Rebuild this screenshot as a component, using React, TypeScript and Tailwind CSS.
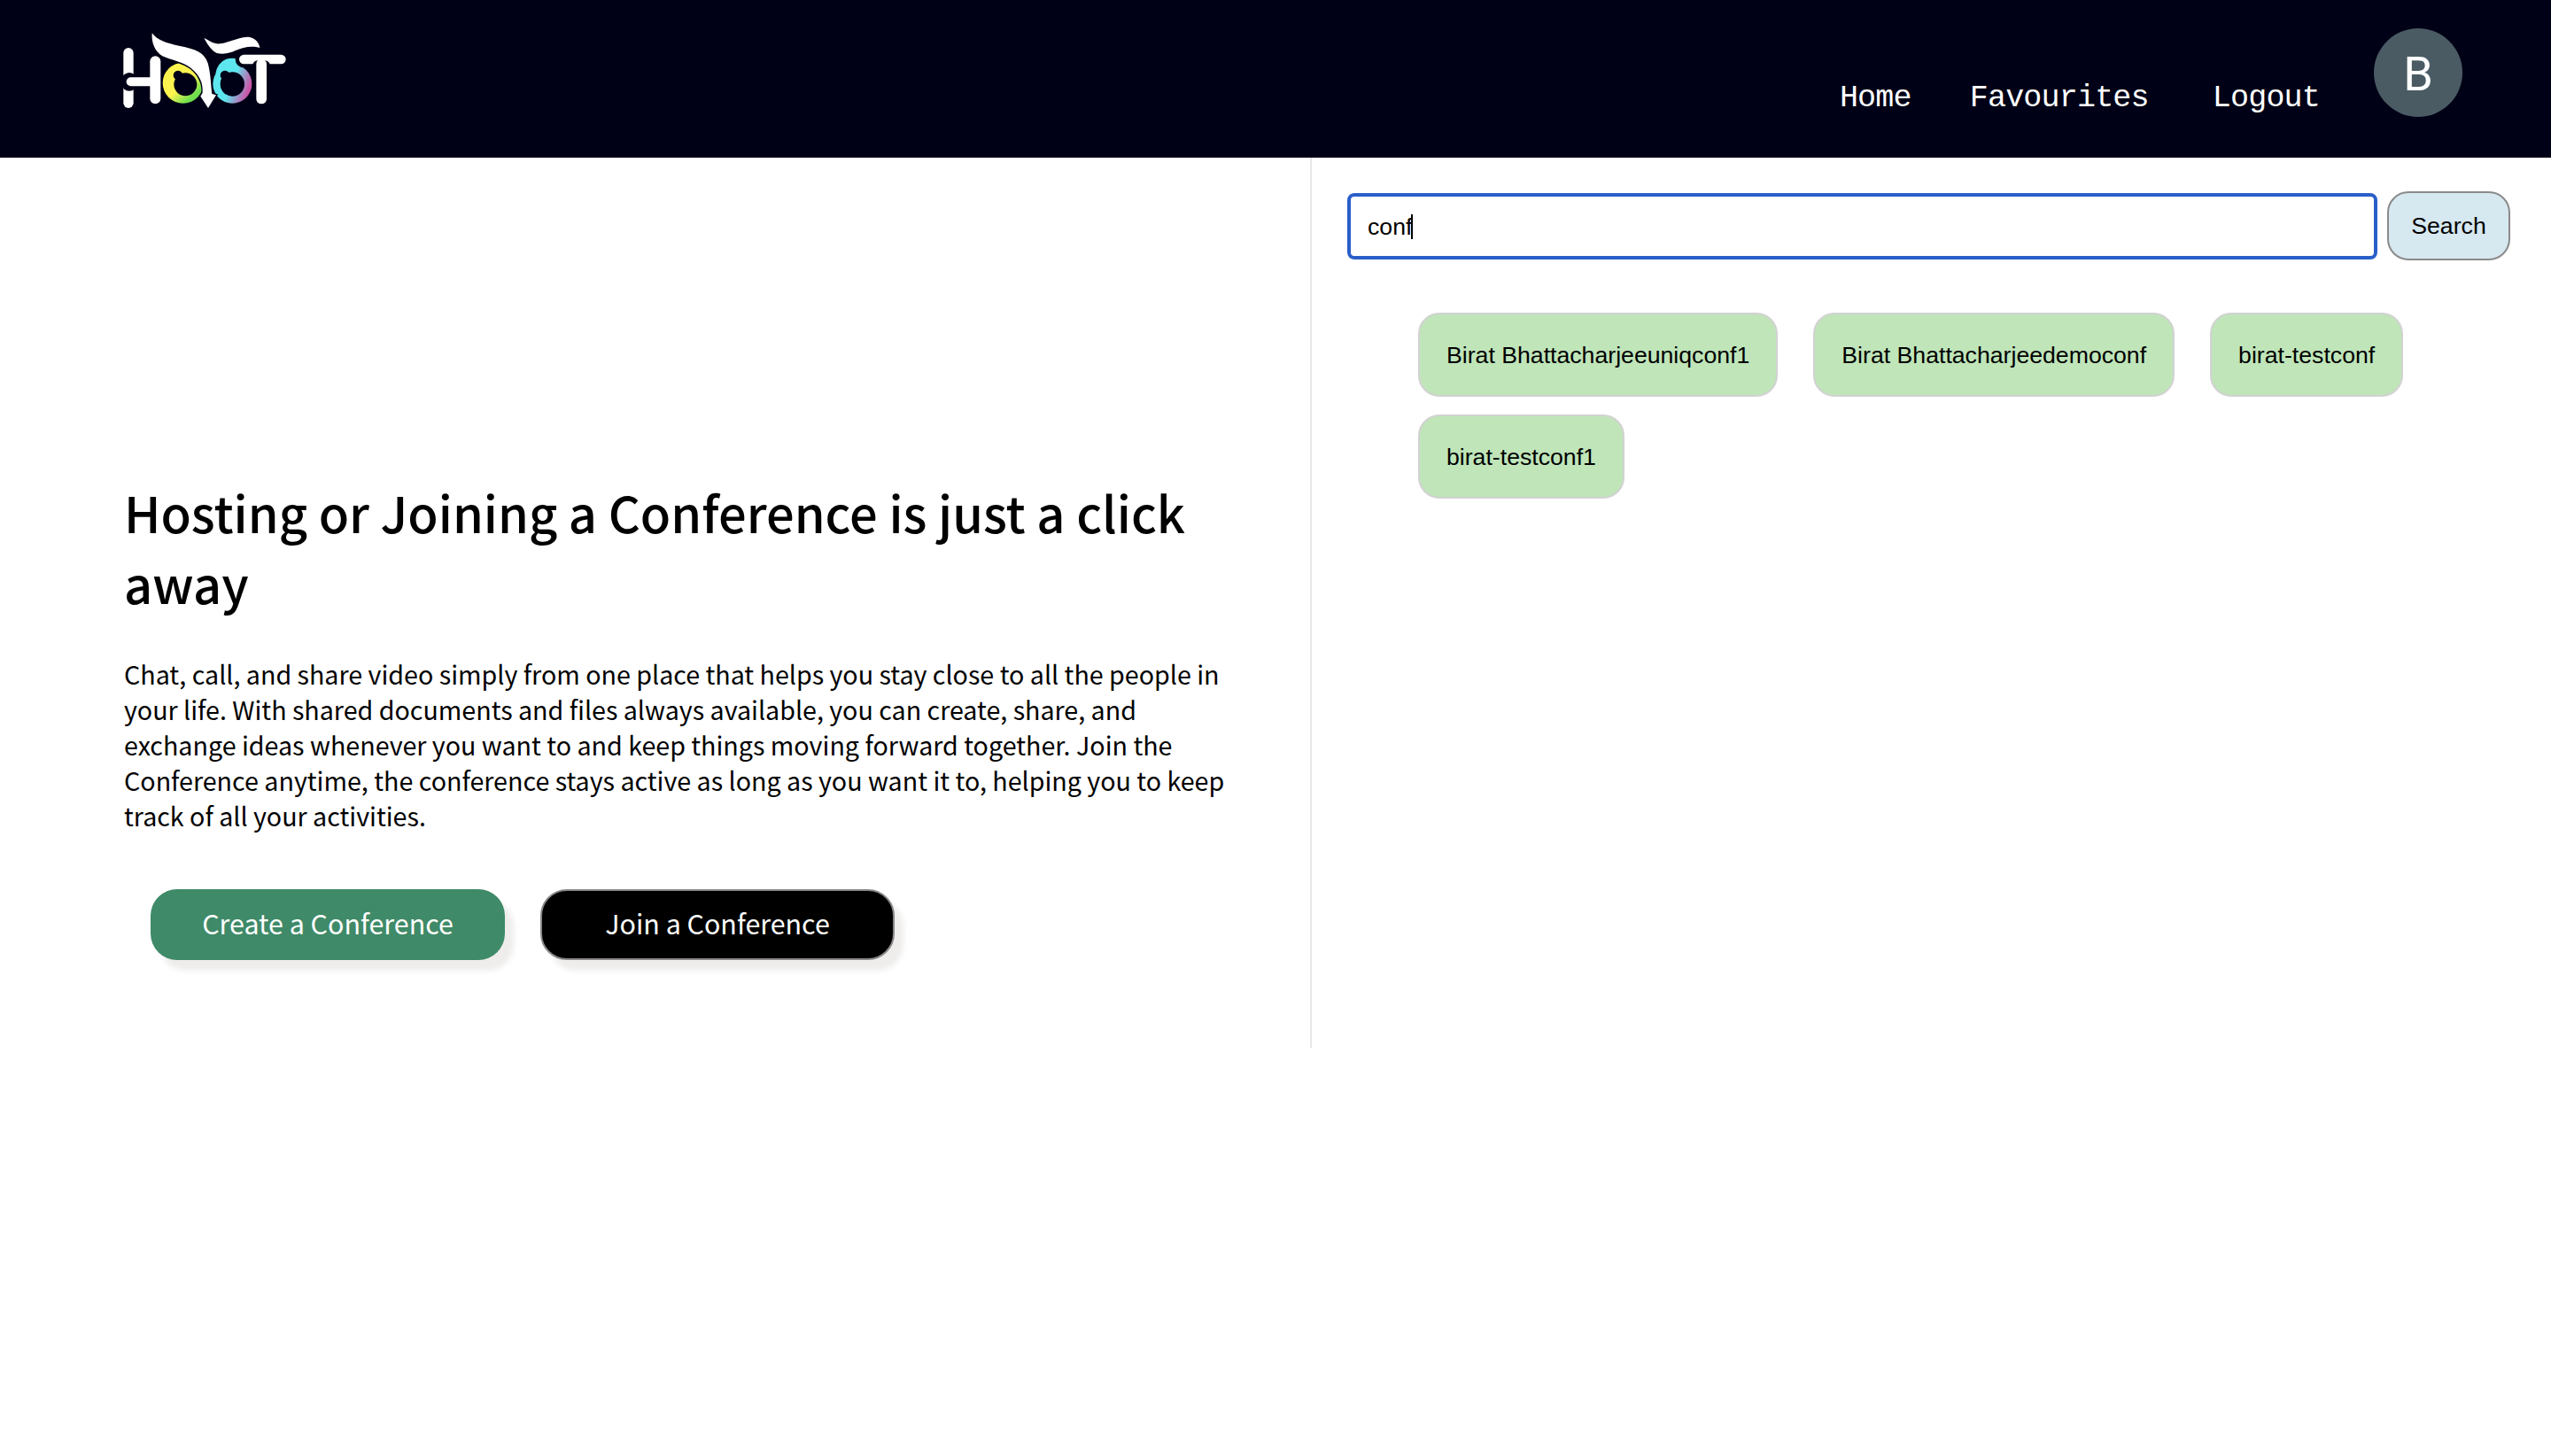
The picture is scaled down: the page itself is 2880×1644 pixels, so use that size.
import React from "react";

function Logo() {
  return (
    <svg width="300" height="178" viewBox="0 0 900 534" className="block shrink-0">
      <defs>
        <linearGradient id="lg1" x1="0.15" y1="0.15" x2="0.85" y2="0.95">
          <stop offset="0.5" stopColor="#fdf34f" />
          <stop offset="0.85" stopColor="#6fe04e" />
        </linearGradient>
        <linearGradient id="lg2" x1="0.15" y1="0.4" x2="1" y2="0.7">
          <stop offset="0.35" stopColor="#5de6ee" />
          <stop offset="0.9" stopColor="#cc55a8" />
        </linearGradient>
      </defs>
      {/* H */}
      <rect x="118" y="162" width="34" height="204" rx="17" fill="#fff" />
      <rect x="208" y="190" width="36" height="162" rx="18" fill="#fff" />
      <rect x="112" y="246" width="52" height="62" rx="26" fill="#000116" />
      <rect x="128" y="262" width="112" height="30" rx="15" fill="#fff" />
      {/* left eye */}
      <circle cx="320" cy="281" r="69" fill="url(#lg1)" />
      <circle cx="328" cy="286" r="39" fill="#000116" />
      <circle cx="303" cy="255" r="16" fill="#000116" />
      {/* right eye */}
      <circle cx="487" cy="284" r="66" fill="url(#lg2)" />
      <path d="M430 250 Q436 212 466 200 Q482 195 498 198 L512 240 L440 262 Z" fill="#5de6ee" />
      <circle cx="487" cy="285" r="41" fill="#000116" />
      <circle cx="462" cy="255" r="16" fill="#000116" />
      {/* T */}
      <rect x="497" y="173" width="184" height="56" rx="28" fill="#000116" />
      <rect x="510" y="185" width="158" height="32" rx="16" fill="#fff" />
      <rect x="555" y="205" width="60" height="160" rx="18" fill="#000116" />
      <rect x="568" y="200" width="35" height="152" rx="17" fill="#fff" />
      {/* owl brow and beak */}
      <path
        d="M215 112 C232 136 262 146 310 156 C360 166 392 176 404 214 C414 250 414 290 418 318 L432 322 L405 366 L379 326 L386 314 C388 280 376 256 348 232 C318 208 278 204 250 190 C226 176 212 146 215 112 Z"
        fill="#fff"
        stroke="#000116"
        strokeWidth="8"
        paintOrder="stroke"
      />
      <path
        d="M391 128 C410 138 424 150 446 148 C480 144 516 122 546 126 C566 130 578 146 580 162 C556 154 524 158 496 172 C470 184 436 188 420 170 C406 156 398 142 391 128 Z"
        fill="#fff"
      />
    </svg>
  );
}

const navBase = "font-['Liberation_Mono',monospace] text-[35px] tracking-[-0.8px] text-white leading-[40px]";

function Chip({ label }: { label: string }) {
  return (
    <button className="h-[95px] rounded-[24px] border-2 border-[#d2d2d2] bg-[#bfe5b9] px-[30px] font-['Liberation_Sans',sans-serif] text-[26.67px] text-black">
      {label}
    </button>
  );
}

export default function App() {
  return (
    <div className="min-h-[1644px] w-[2880px] bg-white">
      <header className="flex h-[178px] items-start bg-[#000116] pl-[100px] pr-[100px]">
        <Logo />
        <nav className="ml-auto flex items-start">
          <a className={`${navBase} mt-[91px]`}>Home</a>
          <a className={`${navBase} ml-[66px] mt-[91px]`}>Favourites</a>
          <a className={`${navBase} ml-[72px] mt-[91px]`}>Logout</a>
          <div className="ml-[61px] mt-[32px] flex h-[100px] w-[100px] items-center justify-center rounded-full bg-[#4a5b64] pt-[2px] font-['Roboto',sans-serif] text-[54px] text-white">
            B
          </div>
        </nav>
      </header>
      <main className="flex h-[1005px]">
        <section className="w-[1481px] shrink-0 border-r-2 border-[#e6e6e6] pl-[140px] pr-[80px] pt-[360px] font-['Noto_Sans_CJK_JP',sans-serif] text-black">
          <h1 className="mb-[43px] text-[56px] font-medium leading-[80px]">
            Hosting or Joining a Conference is just a click away
          </h1>
          <p className="mb-[63px] text-[28.65px] leading-[40px]">
            Chat, call, and share video simply from one place that helps you stay close to all the people in your life. With shared documents and files always available, you can create, share, and exchange ideas whenever you want to and keep things moving forward together. Join the Conference anytime, the conference stays active as long as you want it to, helping you to keep track of all your activities.
          </p>
          <div className="ml-[30px] flex gap-[40px]">
            <button className="h-[80px] w-[400px] rounded-[30px] bg-[#3f8a68] pb-[2px] text-[30.4px] text-white shadow-[10px_12px_6px_#eeedec]">
              Create a Conference
            </button>
            <button className="h-[80px] w-[400px] rounded-[30px] border-2 border-[#8a8787] bg-black pb-[2px] text-[30.4px] text-white shadow-[10px_12px_6px_#eeedec]">
              Join a Conference
            </button>
          </div>
        </section>
        <section className="flex-1 pt-[38px] font-['Liberation_Sans',sans-serif]">
          <div className="ml-[40px] flex items-center gap-[11px]">
            <div className="flex h-[75px] w-[1163px] items-center rounded-[8px] border-4 border-[#2a5fc9] pl-[19px] pt-[1px] text-[26.67px] text-black">
              conf
              <span className="ml-[-1px] h-[28px] w-[2px] bg-black" />
            </div>
            <button className="h-[78px] w-[139px] rounded-[24px] border-2 border-[#8a8a8a] bg-[#d6e8f0] text-[26.67px] text-black">
              Search
            </button>
          </div>
          <div className="ml-[120px] mt-[59px] flex flex-wrap gap-x-[40px] gap-y-[20px]">
            <Chip label="Birat Bhattacharjeeuniqconf1" />
            <Chip label="Birat Bhattacharjeedemoconf" />
            <Chip label="birat-testconf" />
            <Chip label="birat-testconf1" />
          </div>
        </section>
      </main>
    </div>
  );
}
